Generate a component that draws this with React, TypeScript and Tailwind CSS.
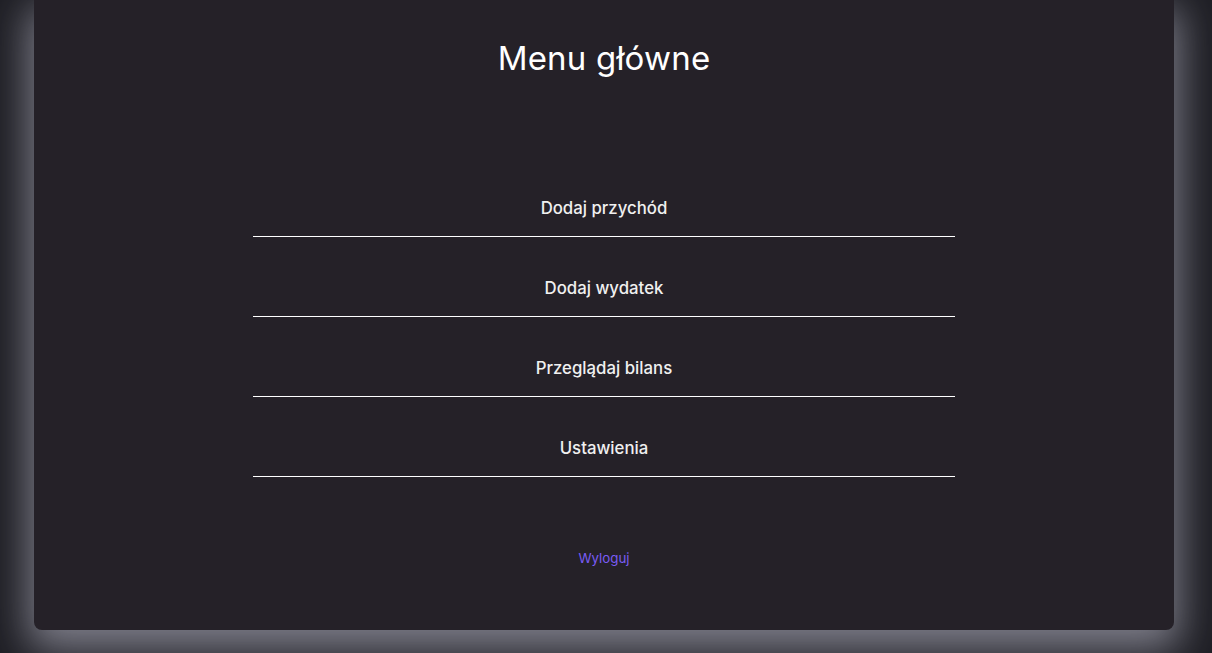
import React from "react";

const items = ["Dodaj przychód", "Dodaj wydatek", "Przeglądaj bilans", "Ustawienia"];

export default function App() {
  return (
    <div
      className="min-h-[653px] w-full bg-[#1e1e24] overflow-hidden"
      style={{ fontFamily: "Inter, 'Noto Sans', sans-serif" }}
    >
      <div className="ml-[34px] w-[1140px] h-[630px] bg-[#252128] rounded-b-lg shadow-[0_14px_40px_6px_rgba(195,195,210,0.58)] flex flex-col items-center">
        <h1 className="mt-[34px] h-[48px] leading-[48px] text-[33px] font-normal text-white tracking-[0.2px]">
          Menu główne
        </h1>
        <div className="mt-[98px] w-[702px] flex flex-col gap-[23px]">
          {items.map((t) => (
            <div
              key={t}
              className="h-[57px] pt-4 pb-4 border-b border-white text-center text-[16.8px] leading-6 font-medium text-[#f0f0f0]"
            >
              {t}
            </div>
          ))}
        </div>
        <a className="mt-[71px] text-[13.3px] leading-5 text-[#7a5cf4] cursor-pointer">Wyloguj</a>
      </div>
    </div>
  );
}
